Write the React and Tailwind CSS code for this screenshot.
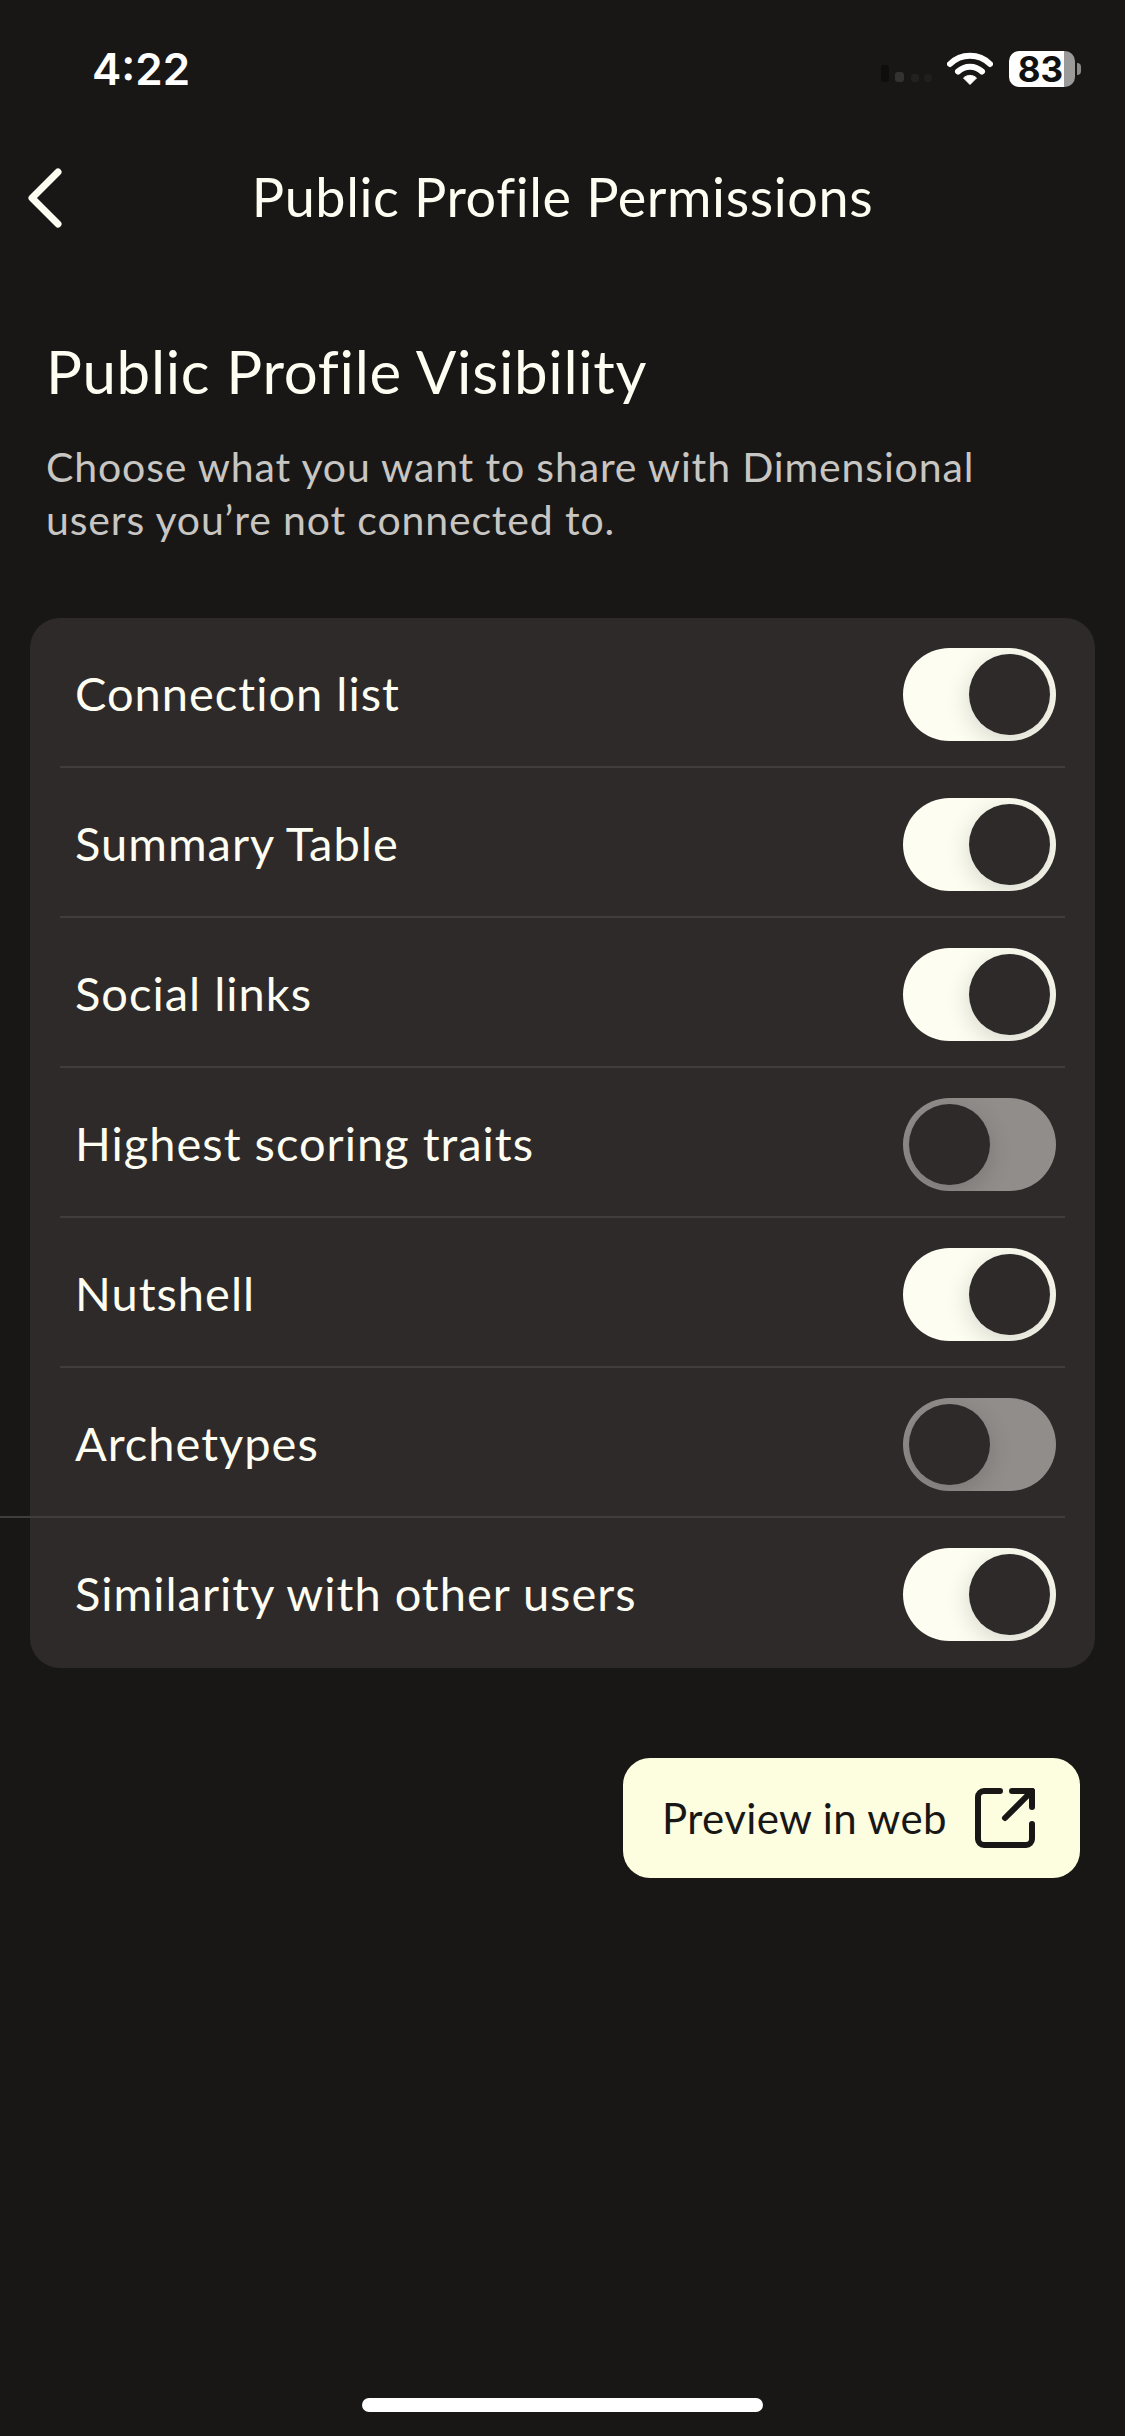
const rows = [
  ["Connection list", true],
  ["Summary Table", true],
  ["Social links", true],
  ["Highest scoring traits", false],
  ["Nutshell", true],
  ["Archetypes", false],
  ["Similarity with other users", true],
];

function Toggle({ on }) {
  return (
    <div
      className={`flex h-[93px] w-[153px] shrink-0 items-center overflow-hidden rounded-full px-[6px] ${
        on ? "justify-end bg-[#fdfdf2]" : "justify-start bg-[#918d8b]"
      }`}
    >
      <div className="h-[81px] w-[81px] rounded-full bg-[#2e2a2a] shadow-[0_6px_24px_rgba(0,0,0,0.16)]" />
    </div>
  );
}

function Signal() {
  return (
    <svg width="52" height="18" viewBox="0 0 52 18" className="mr-[14px] mt-[14px]">
      <rect x="0" y="0" width="8" height="17" rx="3" fill="#0e0e0e" />
      <rect x="14" y="7" width="9" height="10" rx="3" fill="#333231" />
      <rect x="30" y="9" width="8" height="8" rx="3" fill="#222120" />
      <rect x="43" y="9" width="8" height="8" rx="3" fill="#201f1e" />
    </svg>
  );
}

function Wifi() {
  return (
    <svg width="46" height="34" viewBox="0 0 46 34">
      <path d="M3 13 C14 2 32 2 43 13" fill="none" stroke="#fff" strokeWidth="6" strokeLinecap="round" />
      <path d="M11 20.5 C18 14 28 14 35 20.5" fill="none" stroke="#fff" strokeWidth="6" strokeLinecap="round" />
      <path d="M16.5 27 C20 23.5 26 23.5 29.5 27 L23 33.5 Z" fill="#fff" stroke="#fff" strokeWidth="1" strokeLinejoin="round" />
    </svg>
  );
}

function Battery() {
  return (
    <div className="flex items-center">
      <div className="flex h-[36px] w-[66px]">
        <div className="flex w-[55px] items-center justify-end rounded-l-[10px] bg-white pr-[1px] font-['Inter',sans-serif] text-[35px] font-bold leading-[36px] text-[#111]">
          83
        </div>
        <div className="w-[11px] rounded-r-[10px] bg-[#9a9a9a]" />
      </div>
      <div className="ml-[2px] h-[12px] w-[4px] rounded-r-full bg-[#8a8a8a]" />
    </div>
  );
}

export default function App() {
  return (
    <div className="flex min-h-[2436px] w-[1125px] flex-col bg-[#181716] font-['Lato',sans-serif] text-[#fdfdf2]">
      <div className="flex h-[136px] items-start justify-between pl-[92px] pr-[44px] pt-[51px]">
        <span className="font-['Inter',sans-serif] text-[44px] font-semibold leading-[36px] text-white">4:22</span>
        <div className="flex items-start">
          <Signal />
          <div className="mr-[16px]"><Wifi /></div>
          <Battery />
        </div>
      </div>

      <div className="relative flex h-[122px] items-start justify-center pt-[27px]">
        <svg width="36" height="60" viewBox="0 0 36 60" className="absolute left-[27px] top-[32px]">
          <path d="M31 4 L5 30 L31 56" fill="none" stroke="#fdfdf2" strokeWidth="7" strokeLinecap="round" strokeLinejoin="round" />
        </svg>
        <h1 className="text-[54px] font-normal leading-[68px] tracking-[0.6px]">Public Profile Permissions</h1>
      </div>

      <div className="pl-[46px] pr-[30px] pt-[77px]">
        <h2 className="text-[60px] font-normal leading-[72px] tracking-[0.7px]">Public Profile Visibility</h2>
        <p className="mt-[33px] text-[41px] leading-[53px] tracking-[0.85px] text-[#c8c6c2]">
          Choose what you want to share with Dimensional
          <br />
          users you’re not connected to.
        </p>
      </div>

      <div className="mx-[30px] mt-[72px] rounded-[30px] bg-[#2e2a2a]">
        {rows.map(([label, on], i) => {
          const last = i === rows.length - 1;
          const nextIsLast = i === rows.length - 2;
          return (
            <div key={label}>
              <div className={`pl-[45px] pr-[39px] pt-[30px] ${last ? "h-[150px]" : "h-[148px]"}`}>
                <div className="flex h-[93px] items-center justify-between">
                  <span className="-mt-[3px] text-[47px] leading-[56px] tracking-[1px]">{label}</span>
                  <Toggle on={on} />
                </div>
              </div>
              {!last && (
                <div className={`mr-[30px] h-[2px] bg-[#403d3c] ${nextIsLast ? "-ml-[30px]" : "ml-[30px]"}`} />
              )}
            </div>
          );
        })}
      </div>

      <div className="mr-[45px] mt-[90px] flex justify-end">
        <div className="flex h-[120px] w-[457px] items-center justify-between rounded-[27px] bg-[#fdfde0] pl-[39px] pr-[45px] text-[#181716]">
          <span className="text-[42px] leading-[52px] tracking-[0.4px]">Preview in web</span>
          <svg width="60" height="60" viewBox="0 0 60 60" fill="none" stroke="#181716" strokeWidth="6" strokeLinecap="round" strokeLinejoin="round">
            <path d="M25 3 H9 a6 6 0 0 0 -6 6 V51 a6 6 0 0 0 6 6 H51 a6 6 0 0 0 6 -6 V36" />
            <path d="M30 30 L57 3" />
            <path d="M37 3 H57 V19" />
          </svg>
        </div>
      </div>

      <div className="mb-[24px] mt-auto flex justify-center">
        <div className="h-[14px] w-[401px] rounded-full bg-white" />
      </div>
    </div>
  );
}
